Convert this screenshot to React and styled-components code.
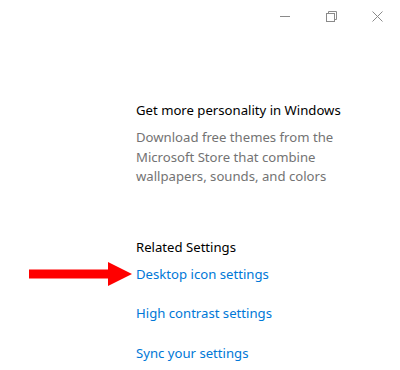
import React from 'react';
import styled, { createGlobalStyle } from 'styled-components';

const GlobalStyle = createGlobalStyle`
  body {
    margin: 0;
    background: #ffffff;
    font-family: 'Noto Sans', 'Open Sans', sans-serif;
  }
`;

const Window = styled.div`
  position: relative;
  width: 400px;
  height: 370px;
  background: #ffffff;
  overflow: hidden;
`;

const TitleBar = styled.div`
  display: flex;
  justify-content: flex-end;
  height: 32px;
`;

const CaptionButton = styled.div`
  width: 46px;
  height: 32px;
  display: flex;
  align-items: center;
  justify-content: center;
`;

const Content = styled.div`
  padding: 68px 0 0 136px;
`;

const Section = styled.div`
  margin-bottom: ${(props) => props.gap || 0}px;
`;

const Heading = styled.div`
  font-size: 13.15px;
  line-height: 20px;
  color: #000000;
  margin-bottom: ${(props) => props.gap || 8}px;
`;

const Description = styled.div`
  font-size: 13.15px;
  line-height: 19.5px;
  color: #737373;
  width: 220px;
`;

const Link = styled.a`
  display: block;
  font-size: 13.15px;
  line-height: 20px;
  color: #0078d7;
  text-decoration: none;
  margin-bottom: 19.5px;
`;

const Arrow = styled.svg`
  position: absolute;
  left: 29px;
  top: 262px;
`;

export default function App() {
  return (
    <Window>
      <GlobalStyle />
      <TitleBar>
        <CaptionButton>
          <svg width="10" height="10" viewBox="0 0 10 10">
            <path d="M0 5.5h10" stroke="#8a8a8a" strokeWidth="1" />
          </svg>
        </CaptionButton>
        <CaptionButton>
          <svg width="11" height="11" viewBox="0 0 11 11" fill="none">
            <rect x="0.5" y="2.5" width="8" height="8" stroke="#8a8a8a" />
            <path d="M2.5 2.5V0.5h8v8h-2" stroke="#8a8a8a" />
          </svg>
        </CaptionButton>
        <CaptionButton>
          <svg width="11" height="11" viewBox="0 0 11 11">
            <path d="M0.5 0.5l10 10M10.5 0.5l-10 10" stroke="#8a8a8a" strokeWidth="1" />
          </svg>
        </CaptionButton>
      </TitleBar>
      <Content>
        <Section gap={50}>
          <Heading>Get more personality in Windows</Heading>
          <Description>
            Download free themes from the Microsoft Store that combine wallpapers, sounds, and colors
          </Description>
        </Section>
        <Section>
          <Heading gap={7}>Related Settings</Heading>
          <Link href="#">Desktop icon settings</Link>
          <Link href="#">High contrast settings</Link>
          <Link href="#">Sync your settings</Link>
        </Section>
      </Content>
      <Arrow width="104" height="24" viewBox="0 0 104 24">
        <path d="M0 7.5h79V0l24 12-24 12v-7.5H0z" fill="#ff0000" />
      </Arrow>
    </Window>
  );
}
